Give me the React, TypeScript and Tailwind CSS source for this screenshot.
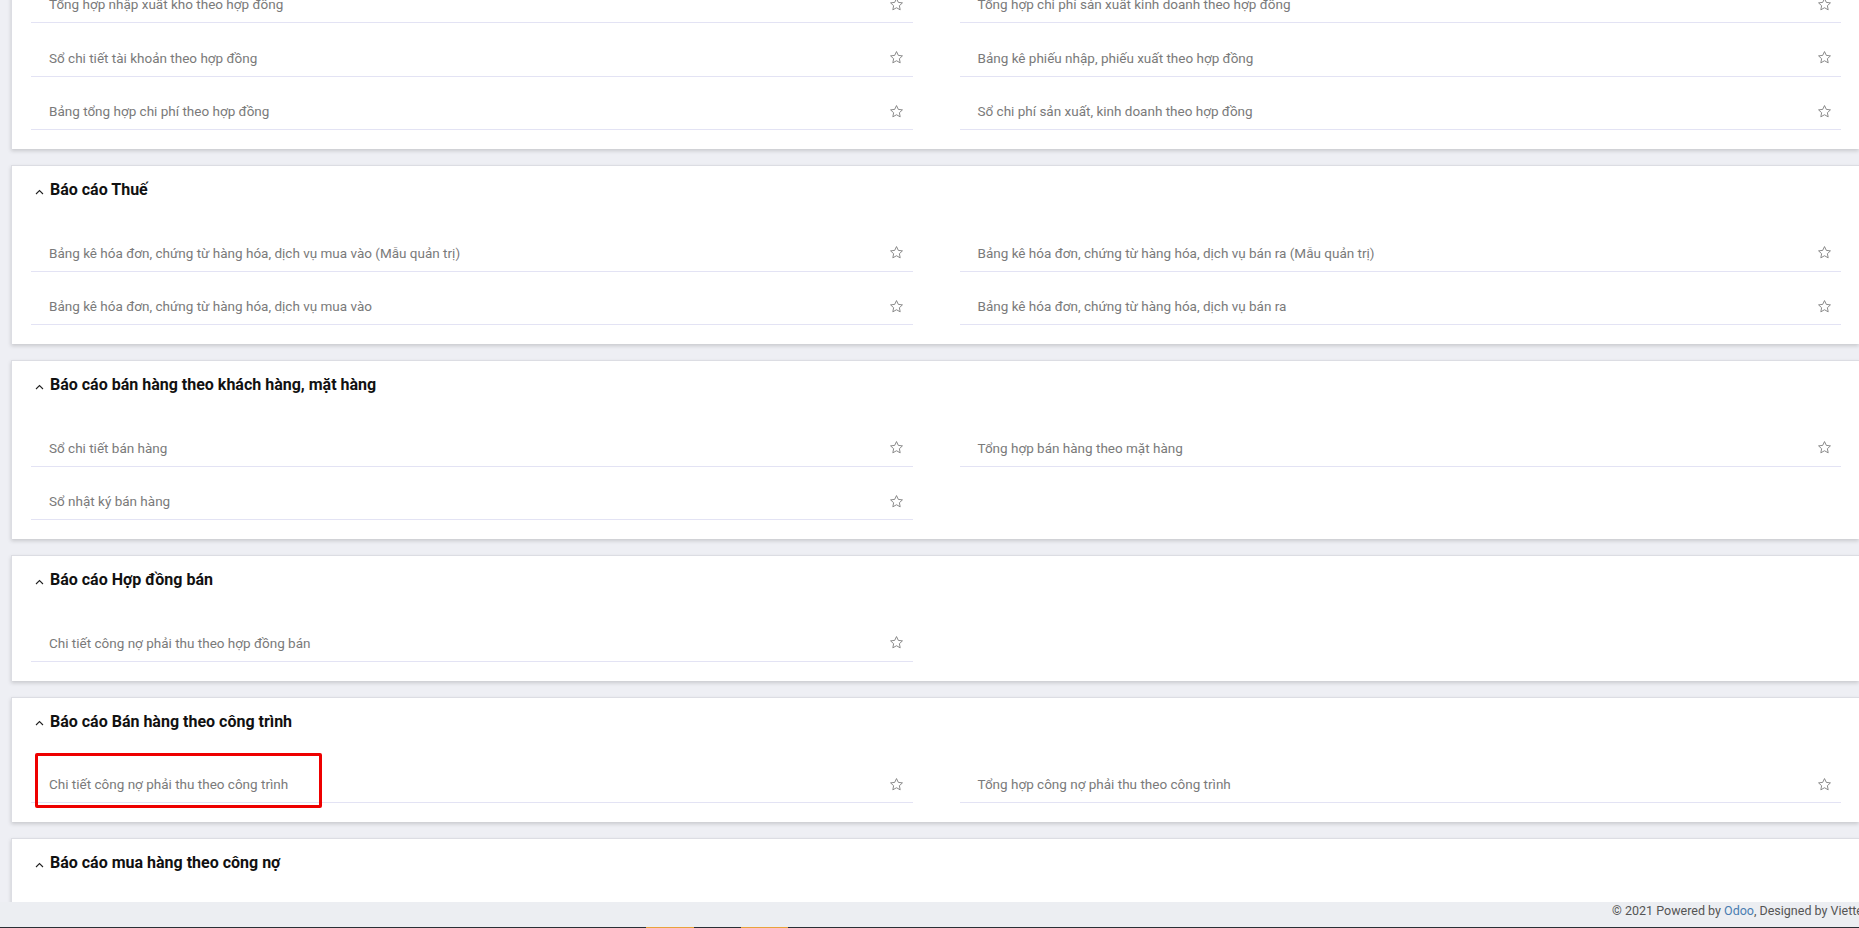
import React from 'react'

interface ReportSection {
  id: string
  title: string
  left: string[]
  right: string[]
}

const sections: ReportSection[] = [
  {
    id: 'hop-dong',
    title: 'Báo cáo Hợp đồng',
    left: [
      'Tổng hợp nhập xuất kho theo hợp đồng',
      'Sổ chi tiết tài khoản theo hợp đồng',
      'Bảng tổng hợp chi phí theo hợp đồng',
    ],
    right: [
      'Tổng hợp chi phí sản xuất kinh doanh theo hợp đồng',
      'Bảng kê phiếu nhập, phiếu xuất theo hợp đồng',
      'Sổ chi phí sản xuất, kinh doanh theo hợp đồng',
    ],
  },
  {
    id: 'thue',
    title: 'Báo cáo Thuế',
    left: [
      'Bảng kê hóa đơn, chứng từ hàng hóa, dịch vụ mua vào (Mẫu quản trị)',
      'Bảng kê hóa đơn, chứng từ hàng hóa, dịch vụ mua vào',
    ],
    right: [
      'Bảng kê hóa đơn, chứng từ hàng hóa, dịch vụ bán ra (Mẫu quản trị)',
      'Bảng kê hóa đơn, chứng từ hàng hóa, dịch vụ bán ra',
    ],
  },
  {
    id: 'ban-hang-kh',
    title: 'Báo cáo bán hàng theo khách hàng, mặt hàng',
    left: ['Sổ chi tiết bán hàng', 'Sổ nhật ký bán hàng'],
    right: ['Tổng hợp bán hàng theo mặt hàng'],
  },
  {
    id: 'hop-dong-ban',
    title: 'Báo cáo Hợp đồng bán',
    left: ['Chi tiết công nợ phải thu theo hợp đồng bán'],
    right: [],
  },
  {
    id: 'cong-trinh',
    title: 'Báo cáo Bán hàng theo công trình',
    left: ['Chi tiết công nợ phải thu theo công trình'],
    right: ['Tổng hợp công nợ phải thu theo công trình'],
  },
  {
    id: 'mua-hang',
    title: 'Báo cáo mua hàng theo công nợ',
    left: ['Chi tiết công nợ phải trả theo nhà cung cấp'],
    right: ['Tổng hợp công nợ phải trả theo nhà cung cấp'],
  },
]

// the row that is boxed in red in the screenshot
const highlighted = 'Chi tiết công nợ phải thu theo công trình'

function StarIcon() {
  return (
    <svg width="15" height="15" viewBox="0 0 24 24" fill="none" stroke="#7a7a7a" strokeWidth="1.4" strokeLinejoin="miter">
      <polygon points="12 2.5 14.9 8.6 21.5 9.4 16.6 13.9 17.9 20.5 12 17.2 6.1 20.5 7.4 13.9 2.5 9.4 9.1 8.6" />
    </svg>
  )
}

function Chevron() {
  return (
    <svg width="9" height="6" viewBox="0 0 9 6" fill="none" stroke="#222" strokeWidth="1.1" className="mt-[3px]">
      <path d="M1 5 L4.5 1.5 L8 5" />
    </svg>
  )
}

function ReportRow({ label }: { label: string }) {
  return (
    <div className="relative flex h-[53.5px] items-center justify-between border-b border-[#e3e3f4] pt-[17px] pl-[18px] pr-[9px]">
      <span className="text-[13.5px] leading-5 text-[#7a7a7a]">{label}</span>
      <StarIcon />
      {label === highlighted && (
        <div className="pointer-events-none absolute left-[4px] top-[3px] h-[55px] w-[287px] rounded-[2px] border-[3px] border-[#ee0000]" />
      )}
    </div>
  )
}

function SectionCard({ section }: { section: ReportSection }) {
  return (
    <div className="shrink-0 border-t border-l border-[#dcdde3] bg-white pl-[19px] pr-[18px] pb-[19px] shadow-[0_2px_4px_rgba(0,0,0,0.16)]">
      <div className="flex h-[52px] items-center gap-[6px] pb-[4px] pl-[4px]">
        <Chevron />
        <span className="text-[16px] font-bold text-[#111]">{section.title}</span>
      </div>
      <div className="grid grid-cols-2 gap-x-[47px]">
        <div className="flex flex-col">
          {section.left.map((l) => (
            <ReportRow key={l} label={l} />
          ))}
        </div>
        <div className="flex flex-col">
          {section.right.map((r) => (
            <ReportRow key={r} label={r} />
          ))}
        </div>
      </div>
    </div>
  )
}

export default function App() {
  return (
    <div className="flex h-[928px] w-full flex-col overflow-hidden bg-[#eeeff4]" style={{ fontFamily: 'Roboto, "Noto Sans", sans-serif' }}>
      <main className="h-[902px] shrink-0 overflow-hidden pl-[11px]">
        <div className="-mt-[83.5px] flex flex-col gap-[16px]">
          {sections.map((s) => (
            <SectionCard key={s.id} section={s} />
          ))}
        </div>
      </main>
      <footer className="flex h-[25px] shrink-0 items-center justify-end overflow-hidden bg-[#eceef2] pb-[6px]">
        <span className="-mr-[7px] whitespace-nowrap text-[12.5px] text-[#555]">
          © 2021 Powered by <span className="text-[#4a7db1]">Odoo</span>, Designed by Viettel
        </span>
      </footer>
      <div className="flex h-[1px] shrink-0 bg-[#2b2f36]">
        <div className="w-[646px]" />
        <div className="w-[48px] bg-[#e8a33c]" />
        <div className="w-[47px]" />
        <div className="w-[47px] bg-[#e8a33c]" />
      </div>
    </div>
  )
}
